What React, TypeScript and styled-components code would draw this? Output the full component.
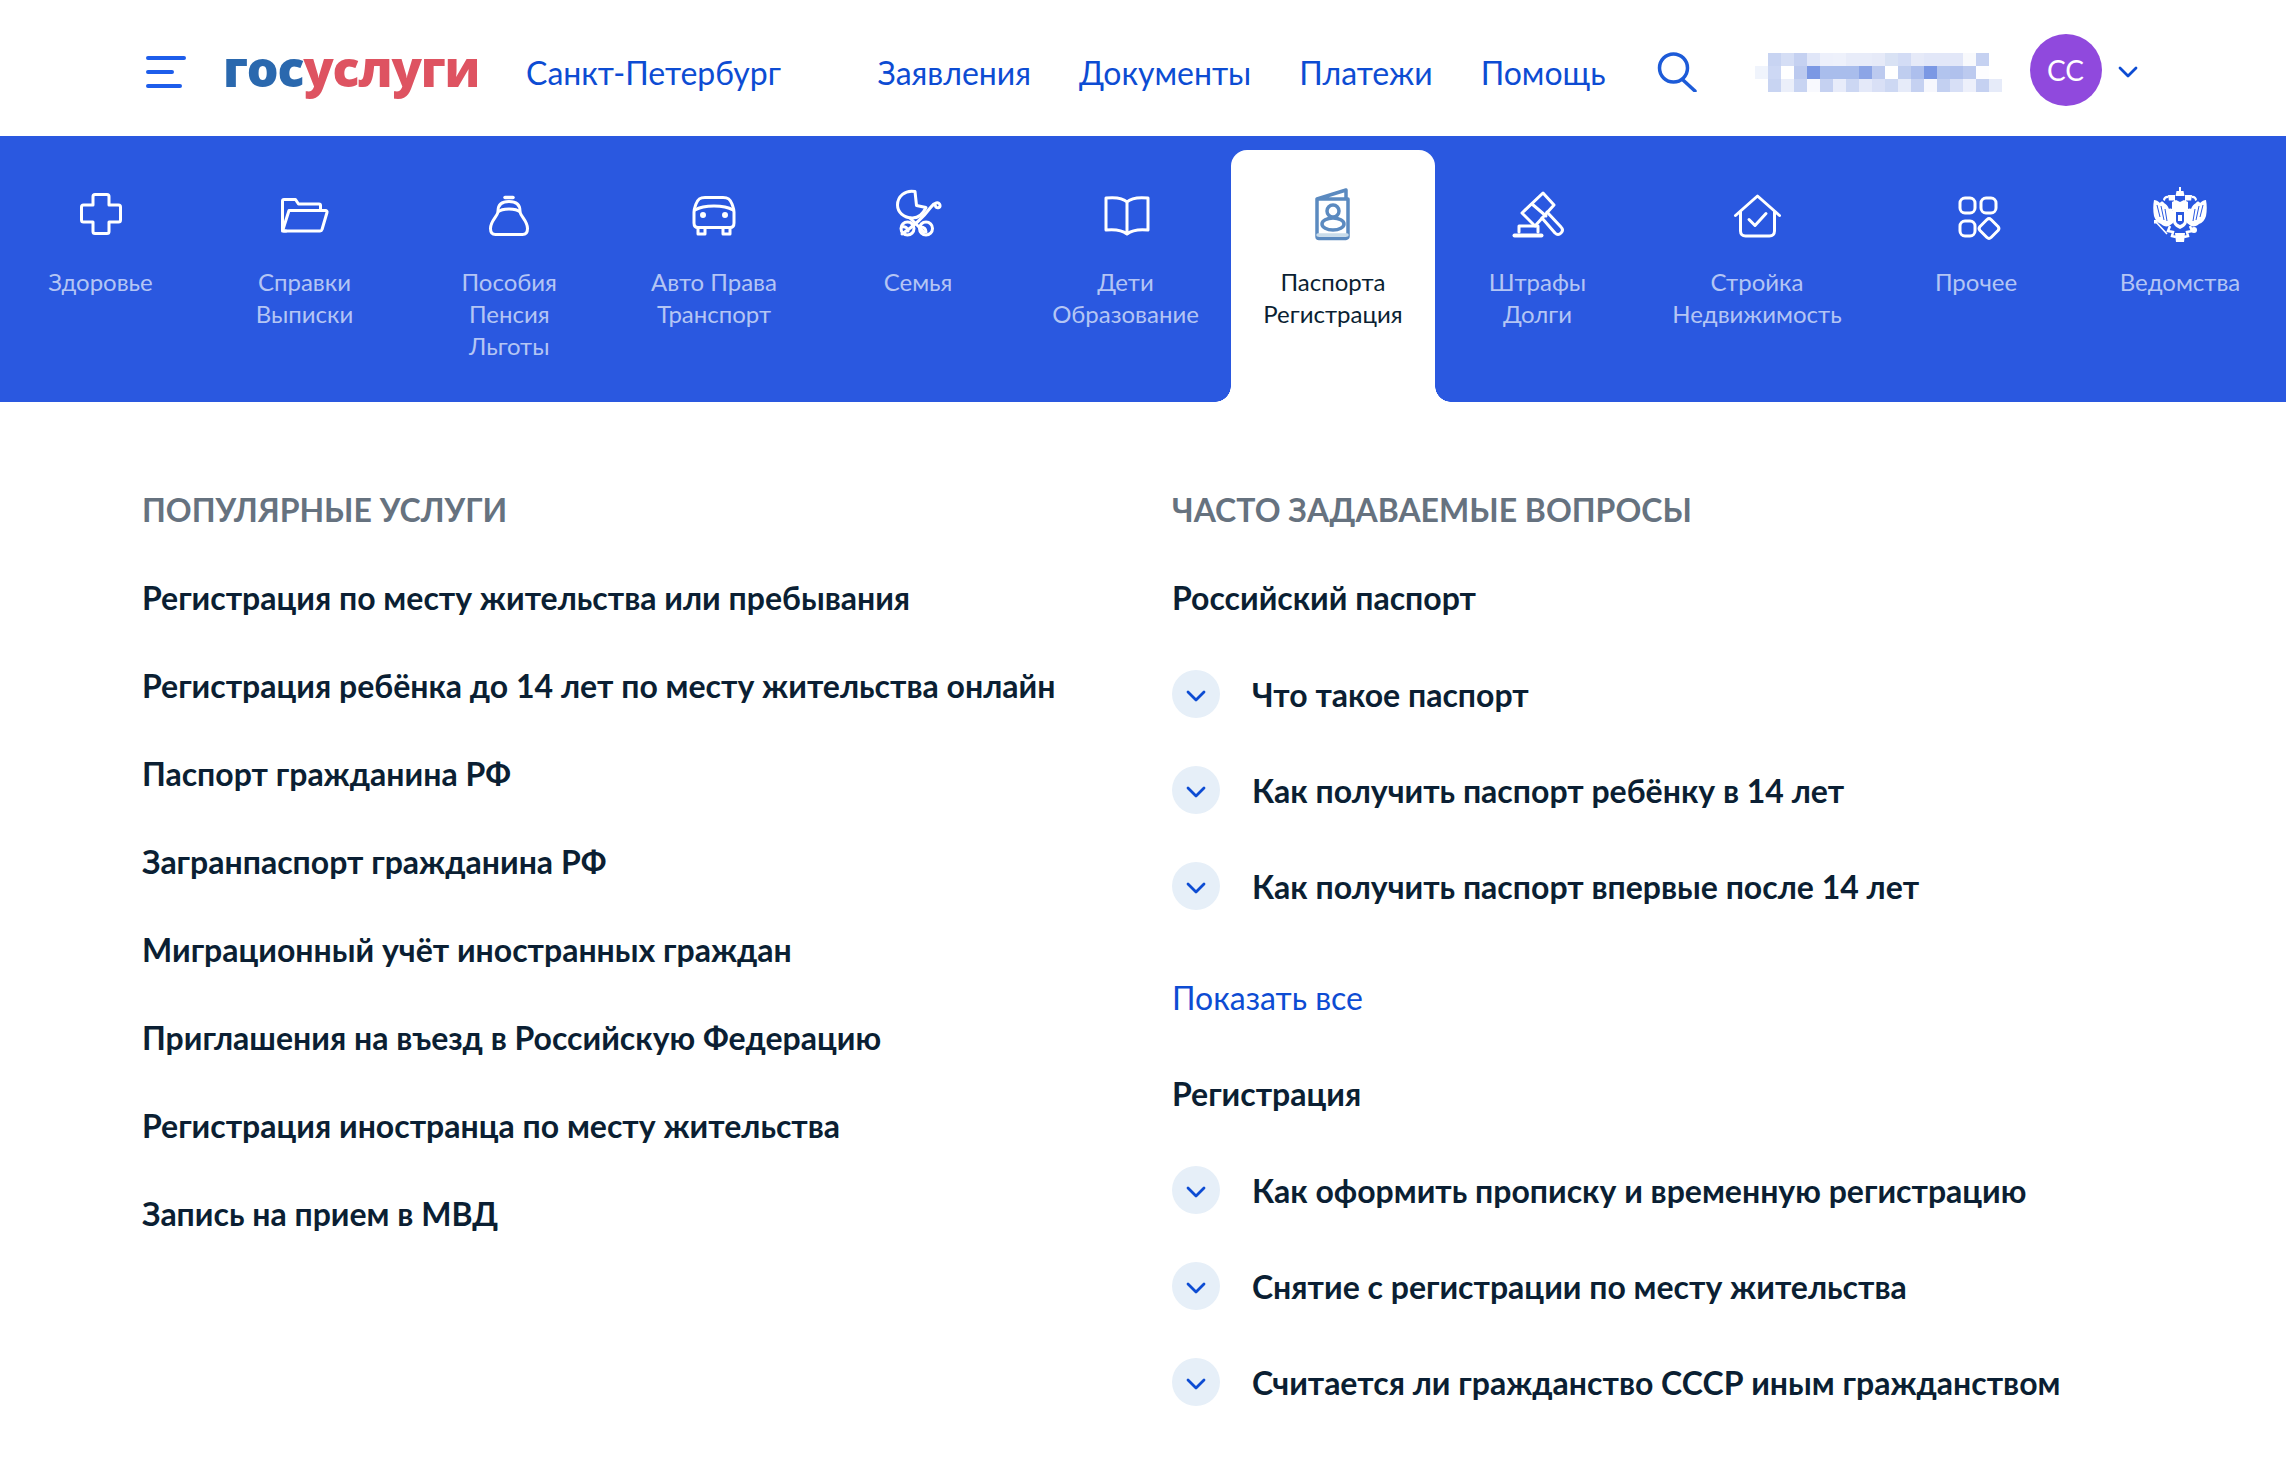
import React from 'react'
import styled, { createGlobalStyle } from 'styled-components'

const GlobalStyle = createGlobalStyle`
  body {
    margin: 0;
    background: #fff;
    font-family: Lato, "Noto Sans", sans-serif;
    color: #0b1f33;
  }
`

const Hamburger = () => (
  <svg width="40" height="32" viewBox="0 0 40 32" fill="none" stroke="#1d5deb" strokeWidth="4" strokeLinecap="round">
    <path d="M2 2h36M2 16h24M2 30h32" />
  </svg>
)

const SearchIcon = () => (
  <svg width="40" height="40" viewBox="0 0 40 40" fill="none" stroke="#1d5bd8" strokeWidth="3.5" strokeLinecap="round">
    <circle cx="16.5" cy="16" r="14" />
    <path d="M26 28l12 11" />
  </svg>
)

const Chevron = ({ size = 20 }: { size?: number }) => (
  <svg width={size} height={size * 0.6} viewBox="0 0 20 12" fill="none" stroke="#0d4cd3" strokeWidth="2.8" strokeLinecap="round" strokeLinejoin="round">
    <path d="M2 2l8 8 8-8" />
  </svg>
)

const mosaic: [number, string[]][] = [
  [1, ['c8d4f2', 'd5def5', 'c5d1f1', 'e0e6f8', 'edf0fb', 'eef1fb', 'e8ecf9', 'e8ecf9', 'e6eaf8', 'd9e2f4', 'd3dcf5', 'e6eaf8', 'e2e7f8', 'e2e7f8', 'e2e7f8', 'f8f9fc', 'c5d1f1']],
  [0, ['f0f4fc', 'cdd8f4', 'ffffff', 'bccaef', '7b98e4', 'a9bdec', 'a9bdec', 'a9bdec', '8ca5e6', 'bccaef', 'ffffff', 'bfcdef', 'adbfed', '7b98e4', 'b2c4ee', 'b0c1ed', 'bccaef', 'fdfdff']],
  [1, ['c8d4f2', 'ebeffa', 'c8d4f2', 'f8f9fe', 'c5d1f1', 'e8ecfa', 'ccd7f3', 'e4e9f9', 'd9e0f6', 'cdd8f3', 'e6ebf9', 'c5d1f1', 'f6f7fd', 'c3d0f1', 'd7dff6', 'edf0fb', 'c5d1f1', 'e6ebf9']],
]

const BlurredName = () => (
  <svg width="247" height="39" viewBox="0 0 247 39" shapeRendering="crispEdges">
    {mosaic.map(([start, row], r) =>
      row.map((c, i) => <rect key={`${r}-${i}`} x={(start + i) * 13} y={r * 13} width="13" height="13" fill={`#${c}`} />)
    )}
  </svg>
)

const Icon = ({ children, color = '#fff', sw = 3 }: { children: React.ReactNode; color?: string; sw?: number }) => (
  <svg width="64" height="64" viewBox="0 0 64 64" fill="none" stroke={color} strokeWidth={sw} strokeLinecap="round" strokeLinejoin="round">
    {children}
  </svg>
)

// half of the emblem, mirrored for the other side
const EagleHalf = () => (
  <g>
    <path d="M6 19c2 0 4 1 6 3 1-2 3-2 4 0 2 1 4 3 5 6 2-1 4 0 4 2v12l-4 3c-3 1-6 0-8-2-3-1-6-4-7-8-1-5-1-11 0-16z" fill="#fff" stroke="none" />
    <path d="M9 24l3 12M13 25l3 14M17 28l2 12" stroke="#2a58e0" strokeWidth="1" fill="none" />
    <path d="M22 45l-2 5 5 1-1 4 4 1" stroke="#fff" strokeWidth="2.5" fill="none" />
    <path d="M27 52l1 9h4v-9z" fill="#fff" stroke="none" />
    <path d="M15 19c0-3 3-5 6-4l-1 2c-2 0-3 1-3 3z" fill="#fff" stroke="none" />
    <path d="M20 14h7v6h-6z" fill="#fff" stroke="none" />
    <path d="M21 20h5M24 23h8" stroke="#2a58e0" strokeWidth="1" fill="none" />
    <path d="M24 21l4-2 4 2v8h-8z" fill="#fff" stroke="none" />
  </g>
)

const icons: Record<string, React.ReactNode> = {
  health: (
    <Icon>
      <path d="M24 15.5a2 2 0 0 1 2-2h12a2 2 0 0 1 2 2V24h9.5a2 2 0 0 1 2 2v13a2 2 0 0 1-2 2H40v9.5a2 2 0 0 1-2 2H26a2 2 0 0 1-2-2V41h-9.5a2 2 0 0 1-2-2V26a2 2 0 0 1 2-2H24z" />
    </Icon>
  ),
  docs: (
    <Icon>
      <path d="M13 50h-2a1.5 1.5 0 0 1-1.500-1.500V20a1.500 1.500 0 0 1 1.500-1.500h11.500l3 4.500H46a1.500 1.500 0 0 1 1.500 1.500V29" />
      <path d="M16 29.500h36.500a1.500 1.500 0 0 1 1.500 2l-5 17a2 2 0 0 1-2 1.500H9.500z" />
    </Icon>
  ),
  purse: (
    <Icon>
      <path d="M28 16.500h8" strokeWidth="3.500" />
      <path d="M21 30c0-7 4-9.500 11-9.500S43 23 43 30" />
      <path d="M21 31c-1 5-7.500 9-7.500 16.500 0 4 2 6 5 6h27c3 0 5-2 5-6C50.500 40 44 36 43 31c-3-3-7-3-11-3s-8 0-11 3z" />
    </Icon>
  ),
  car: (
    <Icon>
      <path d="M12 31c0-3 1-5 2-8 2-5 4-6.500 9-6.500h18c5 0 7 1.500 9 6.500 1 3 2 5 2 8v11c0 3-1 4.500-4 4.500H16c-3 0-4-1.500-4-4.500z" />
      <path d="M13 29c5-3 12-4 19-4s14 1 19 4" />
      <path d="M16 47v6h7v-6M41 47v6h7v-6" />
      <circle cx="21" cy="34" r="1.500" fill="#fff" />
      <circle cx="43" cy="34" r="1.500" fill="#fff" />
    </Icon>
  ),
  family: (
    <Icon>
      <path d="M29 10.500c-10-2-17.500 5-17.500 13.500 0 7 6 13 15 13 5 0 10-3 13.500-10.500L30.500 24.500z" />
      <path d="M16 53c9-6 20-15 29-27 3-4 8-6 9-2 .5 3-4 4-4.500 1" />
      <path d="M24 37l14 14" />
      <circle cx="21.500" cy="47.500" r="6.500" />
      <circle cx="40" cy="47.500" r="6.500" />
      <path d="M16 46c3-1 6 1 6 4M35 46c3 0 5 2 5 5" />
    </Icon>
  ),
  kids: (
    <Icon>
      <path d="M33 21c-4-4-11-5-21-4v32c10-1 16 0 21 4 5-4 11-5 21-4V17c-10-1-17 0-21 4zM33 21v30" />
    </Icon>
  ),
  passport: (
    <Icon color="#5b8ac0" sw={3.500}>
      <path d="M16 18v37.500c0 1 .5 2 2 2h27c1 0 2-1 2-2V18zM16 18L45 9v9" />
      <path d="M17 54h29" stroke="#c9dcea" />
      <circle cx="32" cy="30" r="6" />
      <ellipse cx="32" cy="43" rx="11" ry="6" />
    </Icon>
  ),
  fines: (
    <Icon>
      <path d="M16 32l21-20 11 12-19 21z" />
      <path d="M26 23l14 12" />
      <path d="M36 37l13 15c2 2 4 2 6 0s2-4 0-6L41 31" />
      <path d="M13 51v-6h19v6" />
      <path d="M8.500 54.500h27" strokeWidth="4" />
    </Icon>
  ),
  house: (
    <Icon>
      <path d="M10.500 34.500L32.500 15 54.500 34.500" />
      <path d="M15.500 31v19c0 3 2 5 5 5h24c3 0 5-2 5-5V31" />
      <path d="M24 38.500l6 6 11-12" />
    </Icon>
  ),
  other: (
    <Icon>
      <rect x="16" y="17" width="15" height="15" rx="5" />
      <rect x="37" y="17" width="15" height="15" rx="5" />
      <rect x="16" y="40" width="15" height="15" rx="5" />
      <path d="M43 38.500a3 3 0 0 1 4 0l7 7a3 3 0 0 1 0 4l-7 7a3 3 0 0 1-4 0l-7-7a3 3 0 0 1 0-4z" />
    </Icon>
  ),
  agencies: (
    <svg width="64" height="64" viewBox="0 0 64 64">
      <EagleHalf />
      <g transform="translate(64 0) scale(-1 1)">
        <EagleHalf />
      </g>
      <path d="M32 6v4" stroke="#fff" strokeWidth="2" />
      <path d="M28.500 10h7l1 5h-9z" fill="#fff" />
      <path d="M25 28h14v12c0 4-3 6-7 8-4-2-7-4-7-8z" fill="#fff" />
      <path d="M28 31h8v9c0 2-2 3-4 4-2-1-4-2-4-4z" fill="#2a58e0" />
      <path d="M30 34h4v6h-4z" fill="#fff" />
      <path d="M8 41l11 12" stroke="#fff" strokeWidth="1.600" />
      <rect x="6" y="39" width="3.500" height="3.500" fill="#fff" />
      <circle cx="46" cy="49" r="3" fill="#fff" />
    </svg>
  ),
}

const tabs = [
  { id: 'health', lines: ['Здоровье'] },
  { id: 'docs', lines: ['Справки', 'Выписки'] },
  { id: 'purse', lines: ['Пособия', 'Пенсия', 'Льготы'] },
  { id: 'car', lines: ['Авто Права', 'Транспорт'] },
  { id: 'family', lines: ['Семья'] },
  { id: 'kids', lines: ['Дети', 'Образование'] },
  { id: 'passport', lines: ['Паспорта', 'Регистрация'], active: true },
  { id: 'fines', lines: ['Штрафы', 'Долги'] },
  { id: 'house', lines: ['Стройка', 'Недвижимость'] },
  { id: 'other', lines: ['Прочее'] },
  { id: 'agencies', lines: ['Ведомства'] },
]

const popular = [
  'Регистрация по месту жительства или пребывания',
  'Регистрация ребёнка до 14 лет по месту жительства онлайн',
  'Паспорт гражданина РФ',
  'Загранпаспорт гражданина РФ',
  'Миграционный учёт иностранных граждан',
  'Приглашения на въезд в Российскую Федерацию',
  'Регистрация иностранца по месту жительства',
  'Запись на прием в МВД',
]

const passportFaq = ['Что такое паспорт', 'Как получить паспорт ребёнку в 14 лет', 'Как получить паспорт впервые после 14 лет']
const registrationFaq = [
  'Как оформить прописку и временную регистрацию',
  'Снятие с регистрации по месту жительства',
  'Считается ли гражданство СССР иным гражданством',
]

const Question = ({ text }: { text: string }) => (
  <FaqRow>
    <ChevronCircle>
      <Chevron />
    </ChevronCircle>
    <FaqText>{text}</FaqText>
  </FaqRow>
)

const App = () => {
  return (
    <Page>
      <GlobalStyle />
      <Header>
        <BurgerBox>
          <Hamburger />
        </BurgerBox>
        <Logo>
          <LogoBlue>гос</LogoBlue>
          <LogoRed>услуги</LogoRed>
        </Logo>
        <City>Санкт-Петербург</City>
        <Nav>
          <NavLink>Заявления</NavLink>
          <NavLink>Документы</NavLink>
          <NavLink>Платежи</NavLink>
          <NavLink>Помощь</NavLink>
        </Nav>
        <SearchBox>
          <SearchIcon />
        </SearchBox>
        <Profile>
          <BlurredName />
          <Avatar>СС</Avatar>
          <Chevron />
        </Profile>
      </Header>

      <TabBar>
        <TabRow>
          {tabs.map((t) => (
            <Tab key={t.id} $active={!!t.active}>
              <TabIcon>{icons[t.id]}</TabIcon>
              {t.lines.map((l) => (
                <TabLine key={l}>{l}</TabLine>
              ))}
            </Tab>
          ))}
        </TabRow>
      </TabBar>

      <Content>
        <LeftColumn>
          <SectionTitle>Популярные услуги</SectionTitle>
          {popular.map((p) => (
            <PopularItem key={p}>{p}</PopularItem>
          ))}
        </LeftColumn>
        <RightColumn>
          <SectionTitle>Часто задаваемые вопросы</SectionTitle>
          <FaqGroupTitle>Российский паспорт</FaqGroupTitle>
          {passportFaq.map((q) => (
            <Question key={q} text={q} />
          ))}
          <ShowAll>Показать все</ShowAll>
          <FaqGroupTitle>Регистрация</FaqGroupTitle>
          {registrationFaq.map((q) => (
            <Question key={q} text={q} />
          ))}
        </RightColumn>
      </Content>
    </Page>
  )
}

export default App

const Page = styled.div`
  width: 2286px;
  height: 1484px;
  overflow: hidden;
  background: #fff;
`

const Header = styled.header`
  height: 136px;
  box-sizing: border-box;
  display: flex;
  align-items: center;
  padding: 8px 0 0 146px;
`

const BurgerBox = styled.div`
  display: flex;
  width: 77px;
`

const Logo = styled.div`
  width: 303px;
  font-family: "Open Sans", "Noto Sans", sans-serif;
  font-size: 50px;
  font-weight: 800;
  letter-spacing: -1.2px;
  line-height: 1;
  margin-bottom: 8px;
`

const LogoBlue = styled.span`
  color: #2a68ae;
`

const LogoRed = styled.span`
  color: #de5361;
`

const City = styled.div`
  width: 351.5px;
  font-size: 32px;
  color: #0d4cd3;
`

const Nav = styled.nav`
  display: flex;
  gap: 48px;
`

const NavLink = styled.a`
  font-size: 32px;
  color: #0d4cd3;
`

const SearchBox = styled.div`
  display: flex;
  margin-left: 51px;
`

const Profile = styled.div`
  display: flex;
  align-items: center;
  margin-left: 58px;
`

const Avatar = styled.div`
  width: 72px;
  height: 72px;
  margin: 0 16px 4px 28px;
  border-radius: 50%;
  background: #9049dd;
  color: #fff;
  font-size: 28px;
  display: flex;
  align-items: center;
  justify-content: center;
`

const TabBar = styled.nav`
  height: 266px;
  box-sizing: border-box;
  padding-top: 14px;
  background: #2a58e0;
  display: flex;
  overflow: hidden;
`

const TabRow = styled.div`
  display: grid;
  grid-template-columns: 204px 204px 205.5px 204px 204px 211px 204px 205px 234px 204px 204px;
  margin-left: -1.5px;
`

const Tab = styled.div<{ $active: boolean }>`
  position: relative;
  box-sizing: border-box;
  padding: 31px 0 0;
  border-radius: 16px 16px 0 0;
  display: flex;
  flex-direction: column;
  align-items: center;
  color: ${(p) => (p.$active ? '#0b1f33' : '#b4c5f4')};
  background: ${(p) => (p.$active ? '#fff' : 'transparent')};

  ${(p) =>
    p.$active &&
    `
    &::before, &::after {
      content: "";
      position: absolute;
      bottom: 0;
      width: 16px;
      height: 16px;
    }
    &::before {
      right: 100%;
      background: radial-gradient(circle at 0 0, transparent 15.5px, #fff 16px);
    }
    &::after {
      left: 100%;
      background: radial-gradient(circle at 100% 0, transparent 15.5px, #fff 16px);
    }
  `}
`

const TabIcon = styled.div`
  display: flex;
  height: 64px;
  margin-bottom: 21px;
`

const TabLine = styled.div`
  font-size: 24px;
  line-height: 32px;
  white-space: nowrap;
`

const Content = styled.main`
  display: flex;
  padding: 86px 0 0 142px;
`

const LeftColumn = styled.section`
  width: 1030px;
`

const RightColumn = styled.section`
  flex: 1;
`

const SectionTitle = styled.h2`
  margin: 0;
  font-size: 32px;
  line-height: 44px;
  font-weight: 700;
  text-transform: uppercase;
  color: #66727f;
`

const PopularItem = styled.div`
  margin-top: 44px;
  font-size: 32px;
  line-height: 44px;
  font-weight: 700;
  color: #0b1f33;
`

const FaqGroupTitle = styled.div`
  font-size: 32px;
  line-height: 44px;
  font-weight: 700;
  color: #0b1f33;
  margin-top: 44px;
`

const FaqRow = styled.div`
  display: flex;
  align-items: center;
  height: 48px;
  margin-top: 48px;

  ${FaqGroupTitle} + & {
    margin-top: 50px;
  }
`

const ChevronCircle = styled.div`
  width: 48px;
  height: 48px;
  margin-right: 32px;
  padding-top: 4px;
  box-sizing: border-box;
  border-radius: 50%;
  background: #e6eff8;
  display: flex;
  align-items: center;
  justify-content: center;
`

const FaqText = styled.div`
  font-size: 32px;
  font-weight: 700;
  color: #0b1f33;
`

const ShowAll = styled.a`
  display: block;
  margin: 66px 0 52px;
  font-size: 32px;
  line-height: 44px;
  color: #0d4cd3;

  & + ${FaqGroupTitle} {
    margin-top: 0;
  }
`
